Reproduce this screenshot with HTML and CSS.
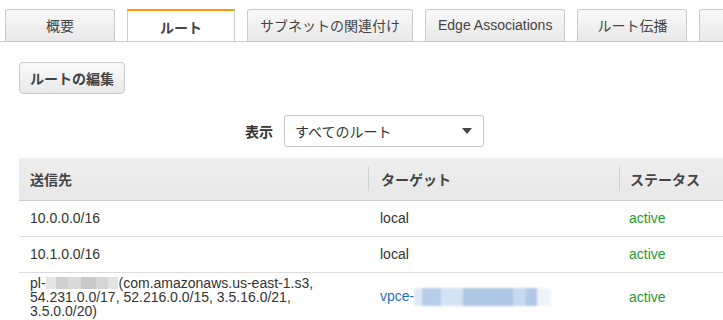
FILE: index.html
```html
<!DOCTYPE html>
<html lang="ja">
<head>
<meta charset="utf-8">
<link rel="stylesheet" href="styles.css">
</head>
<body>
<div class="tabs">
  <div class="tab">概要</div>
  <div class="tab active">ルート</div>
  <div class="tab">サブネットの関連付け</div>
  <div class="tab">Edge Associations</div>
  <div class="tab">ルート伝播</div>
  <div class="tab">タグ</div>
</div>
<div class="content">
  <button class="btn">ルートの編集</button>
  <div class="filter">
    <span class="filter-label">表示</span>
    <div class="select">
      <span>すべてのルート</span>
      <span class="caret"></span>
    </div>
  </div>
  <table class="routes">
    <thead>
      <tr>
        <th class="c1">送信先</th>
        <th class="c2"><span class="sep"></span>ターゲット</th>
        <th class="c3"><span class="sep"></span>ステータス</th>
      </tr>
    </thead>
    <tbody>
      <tr>
        <td>10.0.0.0/16</td>
        <td>local</td>
        <td class="ok">active</td>
      </tr>
      <tr>
        <td>10.1.0.0/16</td>
        <td>local</td>
        <td class="ok">active</td>
      </tr>
      <tr class="multi">
        <td>pl-<span class="blur-gray"></span>(com.amazonaws.us-east-1.s3, 54.231.0.0/17, 52.216.0.0/15, 3.5.16.0/21, 3.5.0.0/20)</td>
        <td><a class="link">vpce-<span class="blur-blue"></span></a></td>
        <td class="ok">active</td>
      </tr>
    </tbody>
  </table>
</div>
</body>
</html>
```
FILE: styles.css
```css
* { box-sizing: border-box; }
html, body {
  margin: 0;
  padding: 0;
  background: #fff;
  overflow: hidden;
  width: 723px;
  height: 320px;
}
body {
  font-family: "Liberation Sans", Arial, "Noto Sans CJK JP", sans-serif;
  color: #333;
  font-size: 14px;
}
.tabs {
  display: flex;
  gap: 12px;
  padding: 9px 0 0 5px;
  border-bottom: 1px solid #c8c8c8;
  white-space: nowrap;
  height: 42px;
  overflow: hidden;
}
.tab {
  flex: none;
  min-width: 110px;
  height: 33px;
  padding: 0 12px;
  border: 1px solid #cacaca;
  border-bottom: none;
  border-radius: 3px 3px 0 0;
  background: linear-gradient(#f9f9f9, #e7e7e7);
  font-size: 14px;
  color: #444;
  display: flex;
  align-items: center;
  justify-content: center;
  padding-bottom: 2px;
}
.tab.active {
  min-width: 108px;
  background: #fff;
  border-top: 2px solid #ff9900;
  border-radius: 0;
  height: 34px;
  font-weight: bold;
  padding-bottom: 1px;
  padding-top: 1px;
  position: relative;
  z-index: 1;
}
.content {
  padding: 0 0 0 19px;
}
.btn {
  display: block;
  margin-top: 20px;
  height: 32px;
  width: 106px;
  padding: 0;
  border: 1px solid #c8c8c8;
  border-radius: 4px;
  background: linear-gradient(#fbfbfb, #e8e8e8);
  font-family: inherit;
  font-size: 14px;
  font-weight: bold;
  color: #444;
}
.filter {
  margin-top: 21px;
  display: flex;
  align-items: center;
  justify-content: center;
  padding-left: 6px;
  padding-right: 19px;
}
.filter-label {
  font-size: 14px;
  font-weight: bold;
  color: #333;
  margin-right: 11px;
}
.select {
  width: 200px;
  height: 32px;
  border: 1px solid #c6c6c6;
  border-radius: 3px;
  display: flex;
  align-items: center;
  justify-content: space-between;
  padding: 0 11px 0 10px;
  font-size: 14px;
  color: #333;
}
.caret {
  width: 0;
  height: 0;
  border-left: 5px solid transparent;
  border-right: 5px solid transparent;
  border-top: 6px solid #444;
}
.routes {
  margin-top: 11px;
  width: 704px;
  border-collapse: collapse;
  table-layout: fixed;
}
.routes th {
  height: 42px;
  background: linear-gradient(#eeeeee, #e8e8e8);
  border-bottom: 1px solid #cfcfcf;
  text-align: left;
  font-size: 14px;
  font-weight: bold;
  color: #444;
  padding: 0 0 0 11px;
  position: relative;
}
.routes th.c1 { width: 349px; }
.routes th.c2 { width: 251px; padding-left: 13px; }
.routes th.c3 { padding-left: 11px; }
.sep {
  position: absolute;
  left: 0;
  top: 9px;
  bottom: 9px;
  width: 1px;
  background: #d0d0d0;
}
.routes td {
  height: 36px;
  padding: 4px 10px 4px 11px;
  border-bottom: 1px solid #dcdcdc;
  line-height: 14px;
  vertical-align: middle;
  color: #333;
  font-size: 14px;
}
.routes td:nth-child(2) { padding-left: 12px; }
.routes td.ok { color: #1e9a34; padding-left: 10px; }
.routes tr.multi td { padding-top: 3px; padding-bottom: 7px; }
.link { color: #1f6fc5; }
.blur-gray {
  display: inline-block;
  width: 72px;
  height: 12px;
  vertical-align: -1px;
  background:
    linear-gradient(90deg, #e6e6e6 0 14%, #cfcfcf 14% 30%, #dadada 30% 48%, #c9c9c9 48% 70%, #d6d6d6 70% 86%, #e2e2e2 86%);
  filter: blur(0.6px);
  margin-right: 1px;
}
.blur-blue {
  display: inline-block;
  width: 137px;
  height: 18px;
  vertical-align: -5px;
  background:
    linear-gradient(90deg, #dde8f5 0 6%, #b4cbe8 6% 20%, #d3e1f2 20% 36%, #a9c3e3 36% 72%, #c4d7ee 72% 82%, #abc4e4 82% 90%, #eef3fa 90%);
  filter: blur(0.8px);
  opacity: 0.95;
}
```
